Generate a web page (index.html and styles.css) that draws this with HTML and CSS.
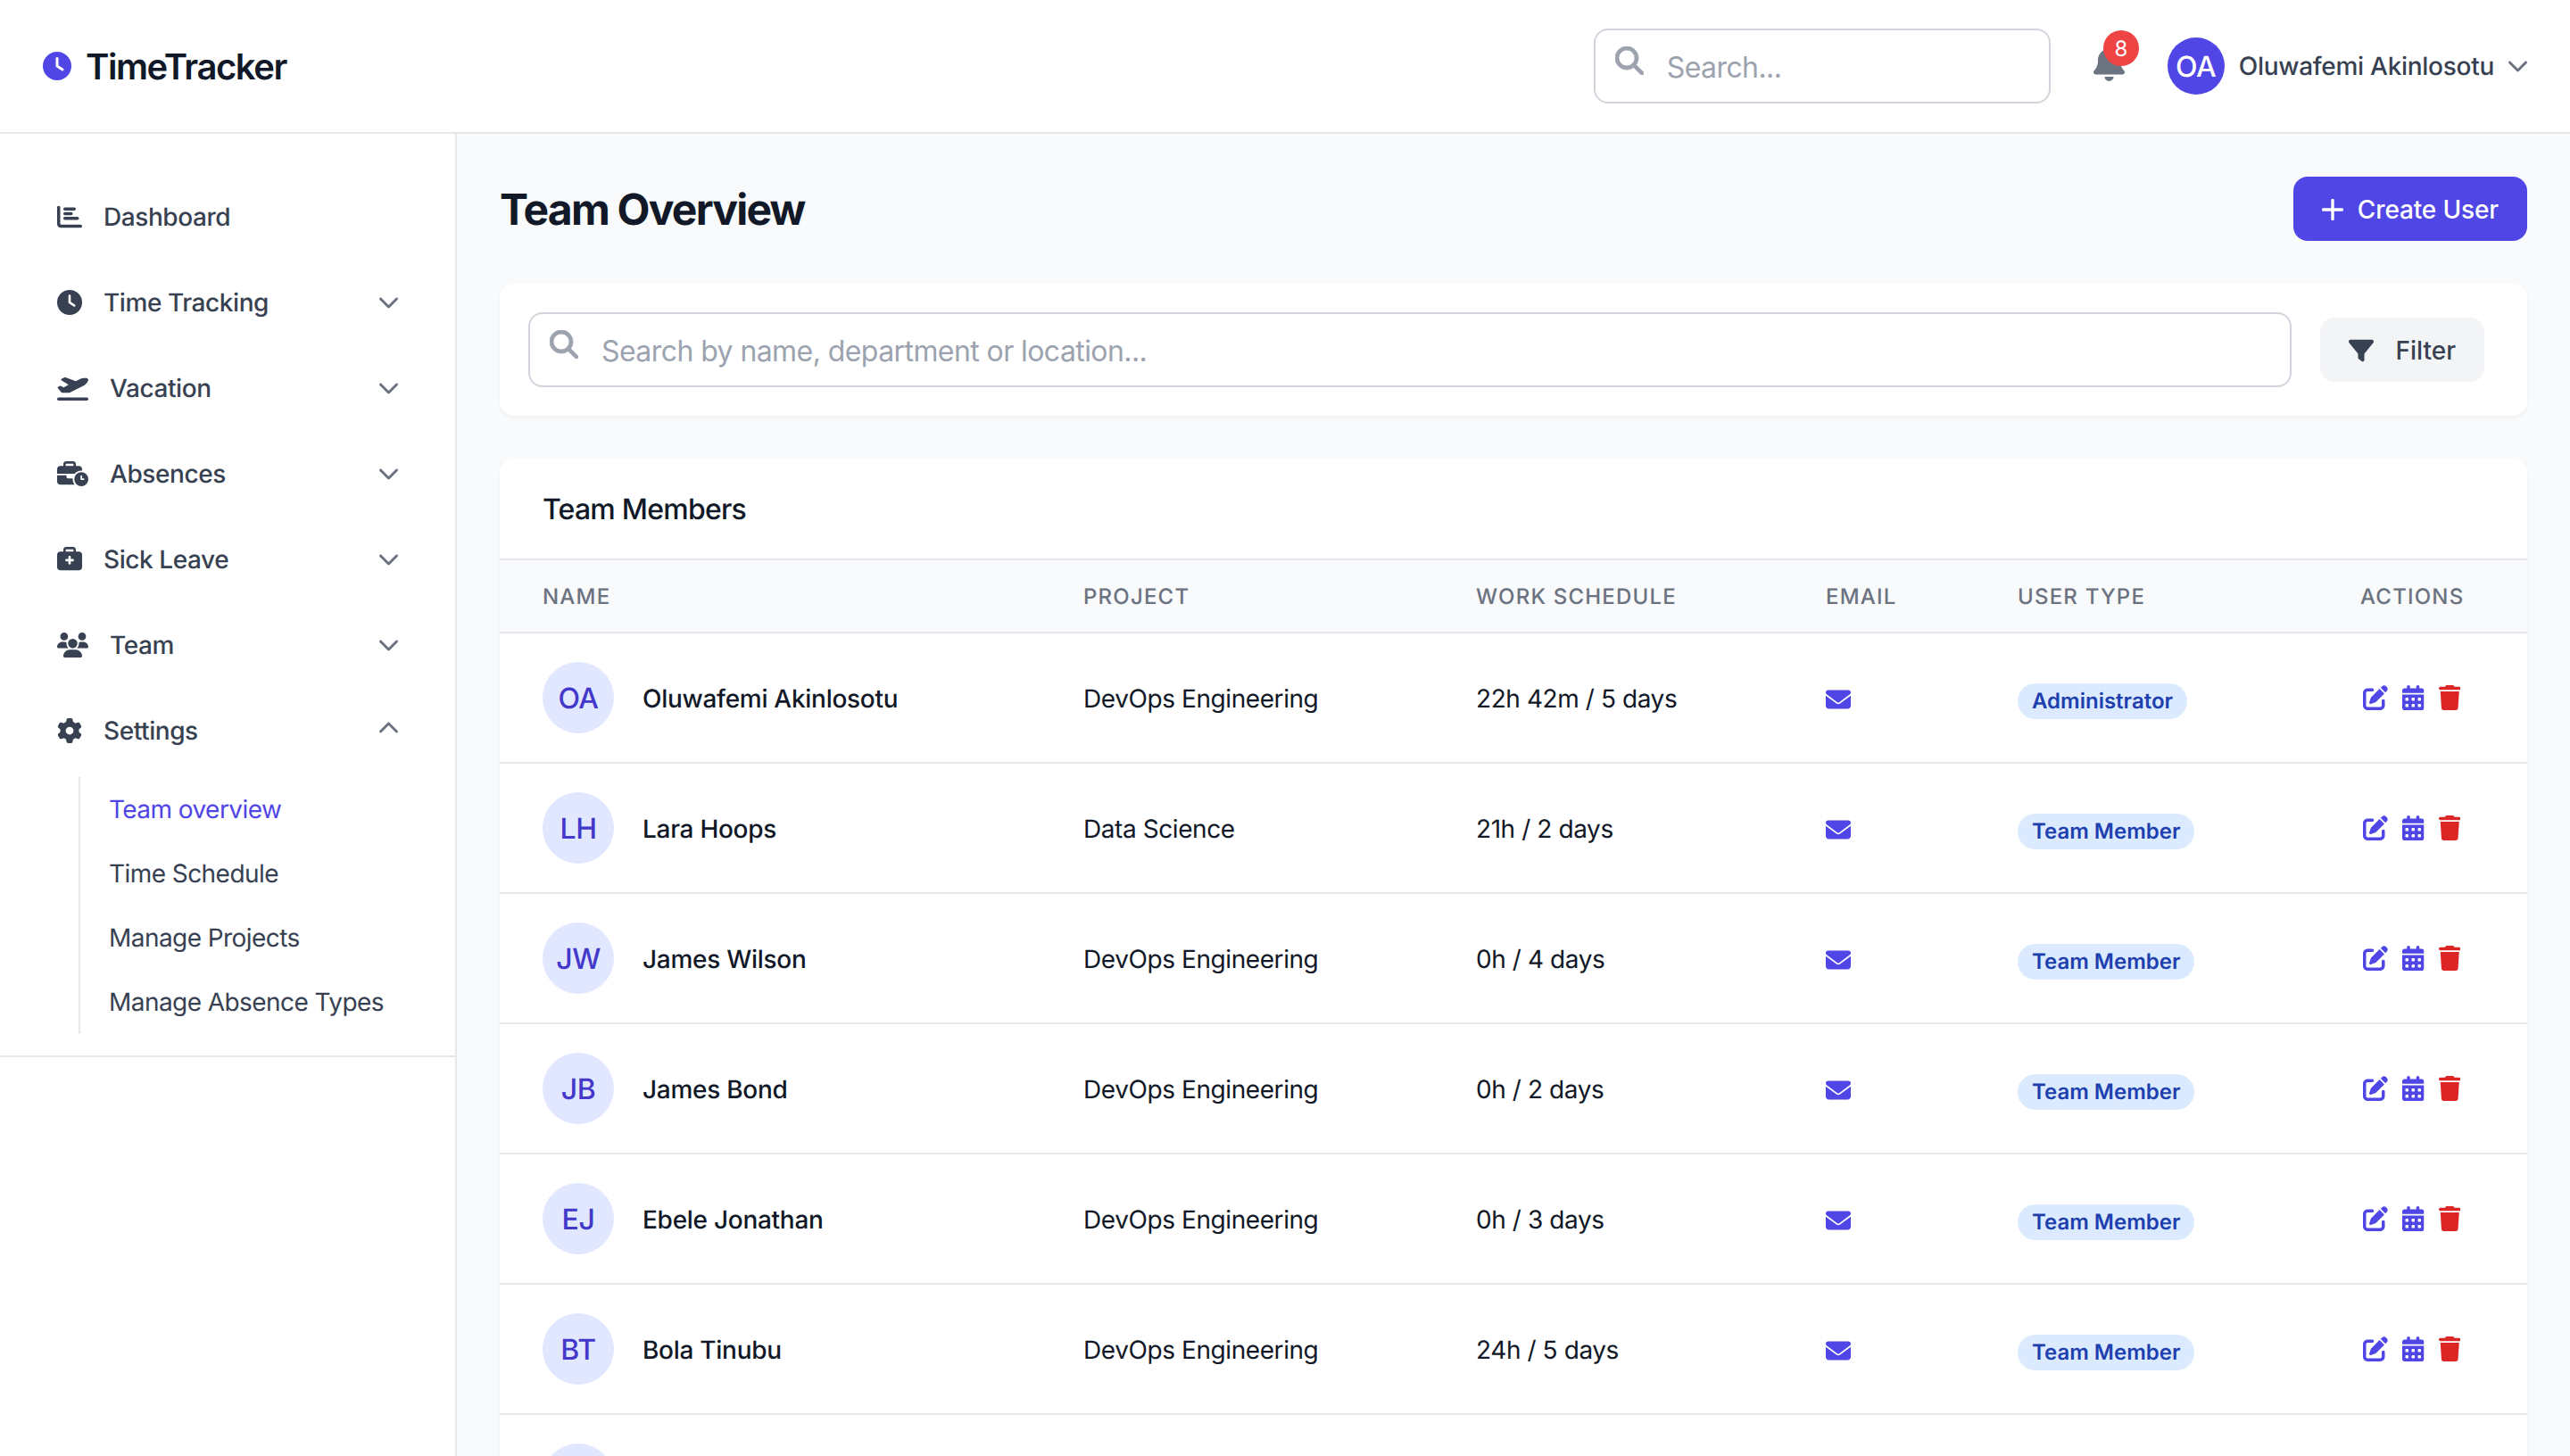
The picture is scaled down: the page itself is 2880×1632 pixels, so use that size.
FILE: index.html
```html
<!DOCTYPE html>
<html lang="en">
<head>
<meta charset="utf-8">
<title>TimeTracker</title>
<link rel="stylesheet" href="styles.css">
</head>
<body>
<svg class="defs" aria-hidden="true">
  <symbol id="i-clock" viewBox="0 0 512 512"><path d="M256 0a256 256 0 1 1 0 512A256 256 0 1 1 256 0zM232 120V256c0 8 4 15.5 10.7 20l96 64c11 7.4 25.9 4.4 33.3-6.7s4.4-25.9-6.7-33.3L280 243.2V120c0-13.3-10.7-24-24-24s-24 10.7-24 24z"/></symbol>
  <symbol id="i-chart" viewBox="0 0 512 512"><path d="M32 32c17.7 0 32 14.3 32 32V400c0 8.8 7.2 16 16 16H480c17.7 0 32 14.3 32 32s-14.3 32-32 32H80c-44.2 0-80-35.8-80-80V64C0 46.3 14.3 32 32 32zm96 64c0-17.7 14.3-32 32-32l192 0c17.7 0 32 14.3 32 32s-14.3 32-32 32l-192 0c-17.7 0-32-14.3-32-32zm32 64l128 0c17.7 0 32 14.3 32 32s-14.3 32-32 32l-128 0c-17.7 0-32-14.3-32-32s14.3-32 32-32zm0 96H416c17.7 0 32 14.3 32 32s-14.3 32-32 32H160c-17.7 0-32-14.3-32-32s14.3-32 32-32z"/></symbol>
  <symbol id="i-plane" viewBox="0 0 640 512"><path d="M381 114.9L186.1 41.8c-16.7-6.2-35.2-5.3-51.1 2.7L89.1 67.4C78 73 77.2 88.5 87.6 95.2l146.9 94.5L136 240 77.8 214.1c-8.7-3.9-18-3.7-26.5 .7L18.8 231c-9.3 4.7-11.8 16.8-5 24.7l73.1 85.3c6.1 7.1 15 11.2 24.3 11.2H248.4c5 0 9.9-1.2 14.3-3.4L535.6 212.2c46.5-23.3 82.5-63.3 100.8-112C645.9 75 627.2 48 600.2 48H542.8c-20.2 0-40.2 4.8-58.2 14L381 114.9zM0 480c0 17.7 14.3 32 32 32H608c17.7 0 32-14.3 32-32s-14.3-32-32-32H32c-17.7 0-32 14.3-32 32z"/></symbol>
  <symbol id="i-business" viewBox="0 0 640 512"><path d="M184 48H328c4.4 0 8 3.6 8 8V96H176V56c0-4.4 3.6-8 8-8zm-56 8V96H64C28.7 96 0 124.7 0 160v96H192 352h8.2c32.3-39.1 81.1-64 135.8-64c5.4 0 10.7 .2 16 .7V160c0-35.3-28.7-64-64-64H384V56c0-30.9-25.1-56-56-56H184c-30.9 0-56 25.1-56 56zM320 352H224c-17.7 0-32-14.3-32-32V288H0V416c0 35.3 28.7 64 64 64H360.2C335.1 449.6 320 410.5 320 368c0-5.4 .2-10.7 .7-16l-.7 0zm320 16a144 144 0 1 0 -288 0 144 144 0 1 0 288 0zM496 288c8.8 0 16 7.2 16 16v48h32c8.8 0 16 7.2 16 16s-7.2 16-16 16H496c-8.8 0-16-7.2-16-16V304c0-8.8 7.2-16 16-16z"/></symbol>
  <symbol id="i-medical" viewBox="0 0 512 512"><path d="M184 48H328c4.4 0 8 3.6 8 8V96H176V56c0-4.4 3.6-8 8-8zm-56 8V96H64C28.7 96 0 124.7 0 160V416c0 35.3 28.7 64 64 64H448c35.3 0 64-28.7 64-64V160c0-35.3-28.7-64-64-64H384V56c0-30.9-25.1-56-56-56H184c-30.9 0-56 25.1-56 56zM232 200c0-8.8 7.2-16 16-16h16c8.8 0 16 7.2 16 16v48h48c8.8 0 16 7.2 16 16v16c0 8.8-7.2 16-16 16H280v48c0 8.8-7.2 16-16 16H248c-8.8 0-16-7.2-16-16V296H184c-8.8 0-16-7.2-16-16V264c0-8.8 7.2-16 16-16h48V200z"/></symbol>
  <symbol id="i-users" viewBox="0 0 640 512"><path d="M144 0a80 80 0 1 1 0 160A80 80 0 1 1 144 0zM512 0a80 80 0 1 1 0 160A80 80 0 1 1 512 0zM0 298.7C0 239.8 47.8 192 106.7 192h42.7c15.9 0 31 3.5 44.6 9.7c-1.3 7.2-1.9 14.7-1.9 22.3c0 38.2 16.8 72.5 43.3 96c-.2 0-.4 0-.7 0H21.3C9.6 320 0 310.4 0 298.7zM405.3 320c-.2 0-.4 0-.7 0c26.6-23.5 43.3-57.8 43.3-96c0-7.6-.7-15-1.9-22.3c13.6-6.3 28.7-9.7 44.6-9.7h42.7C592.2 192 640 239.8 640 298.7c0 11.8-9.6 21.3-21.3 21.3H405.3zM224 224a96 96 0 1 1 192 0 96 96 0 1 1 -192 0zM128 485.3C128 411.7 187.7 352 261.3 352H378.7C452.3 352 512 411.7 512 485.3c0 14.7-11.9 26.7-26.7 26.7H154.7c-14.7 0-26.7-11.9-26.7-26.7z"/></symbol>
  <symbol id="i-gear" viewBox="0 0 512 512"><path d="M495.9 166.6c3.2 8.7 .5 18.4-6.4 24.6l-43.3 39.4c1.1 8.3 1.7 16.8 1.7 25.4s-.6 17.1-1.7 25.4l43.3 39.4c6.9 6.2 9.6 15.9 6.4 24.6c-4.4 11.9-9.7 23.3-15.8 34.3l-4.7 8.1c-6.6 11-14 21.4-22.1 31.2c-5.9 7.2-15.7 9.6-24.5 6.8l-55.7-17.7c-13.4 10.3-28.2 18.9-44 25.4l-12.5 57.1c-2 9.1-9 16.3-18.2 17.8c-13.8 2.3-28 3.5-42.5 3.5s-28.7-1.2-42.5-3.5c-9.2-1.5-16.2-8.7-18.2-17.8l-12.5-57.1c-15.8-6.5-30.6-15.1-44-25.4L83.1 425.9c-8.8 2.8-18.6 .3-24.5-6.8c-8.1-9.8-15.5-20.2-22.1-31.2l-4.7-8.1c-6.1-11-11.4-22.4-15.8-34.3c-3.2-8.7-.5-18.4 6.4-24.6l43.3-39.4C64.6 273.1 64 264.6 64 256s.6-17.1 1.7-25.4L22.4 191.2c-6.9-6.2-9.6-15.9-6.4-24.6c4.4-11.9 9.7-23.3 15.8-34.3l4.7-8.1c6.6-11 14-21.4 22.1-31.2c5.9-7.2 15.7-9.6 24.5-6.8l55.7 17.7c13.4-10.3 28.2-18.9 44-25.4l12.5-57.1c2-9.1 9-16.3 18.2-17.8C227.3 1.2 241.5 0 256 0s28.7 1.2 42.5 3.5c9.2 1.5 16.2 8.7 18.2 17.8l12.5 57.1c15.8 6.5 30.6 15.1 44 25.4l55.7-17.7c8.8-2.8 18.6-.3 24.5 6.8c8.1 9.8 15.5 20.2 22.1 31.2l4.7 8.1c6.1 11 11.4 22.4 15.8 34.3zM256 336a80 80 0 1 0 0-160 80 80 0 1 0 0 160z"/></symbol>
  <symbol id="i-chev" viewBox="32 128 448 320"><path d="M233.4 406.6c12.5 12.5 32.8 12.5 45.3 0l192-192c12.5-12.5 12.5-32.8 0-45.3s-32.8-12.5-45.3 0L256 338.7 86.6 169.4c-12.5-12.5-32.8-12.5-45.3 0s-12.5 32.8 0 45.3l192 192z"/></symbol>
  <symbol id="i-bell" viewBox="0 0 448 512"><path d="M224 0c-17.7 0-32 14.3-32 32V51.2C119 66 64 130.6 64 208v18.8c0 47-17.3 92.4-48.5 127.6l-7.4 8.3c-8.4 9.4-10.4 22.9-5.3 34.4S19.4 416 32 416H416c12.6 0 24-7.4 29.2-18.9s3.1-25-5.3-34.4l-7.4-8.3C401.3 319.2 384 273.9 384 226.8V208c0-77.4-55-142-128-156.8V32c0-17.7-14.3-32-32-32zm45.3 493.3c12-12 18.7-28.3 18.7-45.3H224 160c0 17 6.7 33.3 18.7 45.3s28.3 18.7 45.3 18.7s33.3-6.7 45.3-18.7z"/></symbol>
  <symbol id="i-search" viewBox="0 0 512 512"><path d="M416 208c0 45.9-14.9 88.3-40 122.7L502.6 457.4c12.5 12.5 12.5 32.8 0 45.3s-32.8 12.5-45.3 0L330.7 376c-34.4 25.2-76.8 40-122.7 40C93.1 416 0 322.9 0 208S93.1 0 208 0S416 93.1 416 208zM208 352a144 144 0 1 0 0-288 144 144 0 1 0 0 288z" stroke="currentColor" stroke-width="12"/></symbol>
  <symbol id="i-filter" viewBox="0 0 512 512"><path d="M3.9 54.9C10.5 40.9 24.5 32 40 32H472c15.5 0 29.5 8.9 36.1 22.9s4.6 30.5-5.2 42.5L320 320.9V448c0 12.1-6.8 23.2-17.7 28.6s-23.8 4.3-33.5-3l-64-48c-8.1-6-12.8-15.5-12.8-25.6V320.9L9 97.3C-.7 85.4-2.8 68.8 3.9 54.9z"/></symbol>
  <symbol id="i-plus" viewBox="0 0 24 24"><path d="M12 1.5v21M1.5 12h21" fill="none" stroke="currentColor" stroke-width="3.4" stroke-linecap="round"/></symbol>
  <symbol id="i-mail" viewBox="0 0 512 512"><path d="M48 64C21.5 64 0 85.5 0 112c0 15.1 7.1 29.3 19.2 38.4L236.8 313.6c11.4 8.5 27 8.5 38.4 0L492.8 150.4c12.1-9.1 19.2-23.3 19.2-38.4c0-26.5-21.5-48-48-48H48zM0 176V384c0 35.3 28.7 64 64 64H448c35.3 0 64-28.7 64-64V176L294.4 339.2c-22.8 17.1-54 17.1-76.8 0L0 176z"/></symbol>
  <symbol id="i-edit" viewBox="0 0 512 512"><path d="M471.6 21.7c-21.9-21.9-57.3-21.9-79.2 0L362.3 51.7l97.9 97.9 30.1-30.1c21.9-21.9 21.9-57.3 0-79.2L471.6 21.7zm-299.2 220c-6.1 6.1-10.8 13.6-13.5 21.9l-29.6 88.8c-2.9 8.6-.6 18.1 5.8 24.6s15.9 8.7 24.6 5.8l88.8-29.6c8.2-2.7 15.7-7.4 21.9-13.5L437.7 172.3 339.7 74.3 172.4 241.7zM96 64C43 64 0 107 0 160V416c0 53 43 96 96 96H352c53 0 96-43 96-96V320c0-17.7-14.3-32-32-32s-32 14.3-32 32v96c0 17.7-14.3 32-32 32H96c-17.7 0-32-14.3-32-32V160c0-17.7 14.3-32 32-32h96c17.7 0 32-14.3 32-32s-14.3-32-32-32H96z"/></symbol>
  <symbol id="i-cal" viewBox="0 0 448 512"><path d="M128 0c17.7 0 32 14.3 32 32V64H288V32c0-17.7 14.3-32 32-32s32 14.3 32 32V64h48c26.5 0 48 21.5 48 48v48H0V112C0 85.5 21.5 64 48 64H96V32c0-17.7 14.3-32 32-32zM0 192H448V464c0 26.5-21.5 48-48 48H48c-26.5 0-48-21.5-48-48V192zm64 80v32c0 8.8 7.2 16 16 16h32c8.8 0 16-7.2 16-16V272c0-8.8-7.2-16-16-16H80c-8.8 0-16 7.2-16 16zm128 0v32c0 8.8 7.2 16 16 16h32c8.8 0 16-7.2 16-16V272c0-8.8-7.2-16-16-16H208c-8.8 0-16 7.2-16 16zm144-16c-8.8 0-16 7.2-16 16v32c0 8.8 7.2 16 16 16h32c8.8 0 16-7.2 16-16V272c0-8.8-7.2-16-16-16H336zM64 400v32c0 8.8 7.2 16 16 16h32c8.8 0 16-7.2 16-16V400c0-8.8-7.2-16-16-16H80c-8.8 0-16 7.2-16 16zm144-16c-8.8 0-16 7.2-16 16v32c0 8.8 7.2 16 16 16h32c8.8 0 16-7.2 16-16V400c0-8.8-7.2-16-16-16H208c-8.8 0-16 7.2-16 16zm112 16v32c0 8.8 7.2 16 16 16h32c8.8 0 16-7.2 16-16V400c0-8.8-7.2-16-16-16H336c-8.8 0-16 7.2-16 16z"/></symbol>
  <symbol id="i-trash" viewBox="0 0 448 512"><path d="M135.2 17.7L128 32H32C14.3 32 0 46.3 0 64S14.3 96 32 96H416c17.7 0 32-14.3 32-32s-14.3-32-32-32H320l-7.2-14.3C307.4 6.8 296.3 0 284.2 0H163.8c-12.1 0-23.2 6.8-28.6 17.7zM416 128H32L53.2 467c1.6 25.3 22.6 45 47.9 45H346.9c25.3 0 46.3-19.7 47.9-45L416 128z"/></symbol>
</svg>

<header class="topbar">
  <div class="brand">
    <svg class="brand-icon"><use href="#i-clock"/></svg>
    <span class="brand-name">TimeTracker</span>
  </div>
  <div class="top-right">
    <div class="search search-top">
      <svg class="search-icon"><use href="#i-search"/></svg>
      <input class="search-input" type="text" placeholder="Search...">
    </div>
    <div class="bell">
      <svg class="bell-icon"><use href="#i-bell"/></svg>
      <span class="bell-badge">8</span>
    </div>
    <div class="user">
      <span class="user-avatar">OA</span>
      <span class="user-name">Oluwafemi Akinlosotu</span>
      <svg class="chev"><use href="#i-chev"/></svg>
    </div>
  </div>
</header>

<div class="shell">
  <aside class="sidebar">
    <nav class="nav">
      <a class="nav-item"><svg class="nav-icon"><use href="#i-chart"/></svg><span class="nav-label">Dashboard</span></a>
      <a class="nav-item"><svg class="nav-icon"><use href="#i-clock"/></svg><span class="nav-label">Time Tracking</span><svg class="chev"><use href="#i-chev"/></svg></a>
      <a class="nav-item"><svg class="nav-icon wide"><use href="#i-plane"/></svg><span class="nav-label">Vacation</span><svg class="chev"><use href="#i-chev"/></svg></a>
      <a class="nav-item"><svg class="nav-icon wide"><use href="#i-business"/></svg><span class="nav-label">Absences</span><svg class="chev"><use href="#i-chev"/></svg></a>
      <a class="nav-item"><svg class="nav-icon"><use href="#i-medical"/></svg><span class="nav-label">Sick Leave</span><svg class="chev"><use href="#i-chev"/></svg></a>
      <a class="nav-item"><svg class="nav-icon wide"><use href="#i-users"/></svg><span class="nav-label">Team</span><svg class="chev"><use href="#i-chev"/></svg></a>
      <a class="nav-item nav-open"><svg class="nav-icon"><use href="#i-gear"/></svg><span class="nav-label">Settings</span><svg class="chev up"><use href="#i-chev"/></svg></a>
      <div class="subnav">
        <a class="sub-item active">Team overview</a>
        <a class="sub-item">Time Schedule</a>
        <a class="sub-item">Manage Projects</a>
        <a class="sub-item">Manage Absence Types</a>
      </div>
    </nav>
  </aside>

  <main class="main">
    <div class="page-head">
      <h1 class="page-title">Team Overview</h1>
      <button class="btn-create"><svg class="plus-icon"><use href="#i-plus"/></svg>Create User</button>
    </div>

    <section class="card filter-card">
      <div class="search search-main">
        <svg class="search-icon"><use href="#i-search"/></svg>
        <input class="search-input" type="text" placeholder="Search by name, department or location...">
      </div>
      <button class="btn-filter"><svg class="filter-icon"><use href="#i-filter"/></svg>Filter</button>
    </section>

    <section class="card table-card">
      <h2 class="table-title">Team Members</h2>
      <table class="team">
        <colgroup>
          <col class="c-name"><col class="c-project"><col class="c-schedule"><col class="c-email"><col class="c-type"><col class="c-actions">
        </colgroup>
        <thead>
          <tr><th>Name</th><th>Project</th><th>Work Schedule</th><th>Email</th><th>User Type</th><th>Actions</th></tr>
        </thead>
        <tbody>
          <tr>
            <td><div class="person"><span class="avatar">OA</span><span class="person-name">Oluwafemi Akinlosotu</span></div></td>
            <td>DevOps Engineering</td><td>22h 42m / 5 days</td>
            <td><svg class="mail"><use href="#i-mail"/></svg></td>
            <td><span class="badge">Administrator</span></td>
            <td><div class="actions"><svg class="act edit"><use href="#i-edit"/></svg><svg class="act cal"><use href="#i-cal"/></svg><svg class="act trash"><use href="#i-trash"/></svg></div></td>
          </tr>
          <tr>
            <td><div class="person"><span class="avatar">LH</span><span class="person-name">Lara Hoops</span></div></td>
            <td>Data Science</td><td>21h / 2 days</td>
            <td><svg class="mail"><use href="#i-mail"/></svg></td>
            <td><span class="badge">Team Member</span></td>
            <td><div class="actions"><svg class="act edit"><use href="#i-edit"/></svg><svg class="act cal"><use href="#i-cal"/></svg><svg class="act trash"><use href="#i-trash"/></svg></div></td>
          </tr>
          <tr>
            <td><div class="person"><span class="avatar">JW</span><span class="person-name">James Wilson</span></div></td>
            <td>DevOps Engineering</td><td>0h / 4 days</td>
            <td><svg class="mail"><use href="#i-mail"/></svg></td>
            <td><span class="badge">Team Member</span></td>
            <td><div class="actions"><svg class="act edit"><use href="#i-edit"/></svg><svg class="act cal"><use href="#i-cal"/></svg><svg class="act trash"><use href="#i-trash"/></svg></div></td>
          </tr>
          <tr>
            <td><div class="person"><span class="avatar">JB</span><span class="person-name">James Bond</span></div></td>
            <td>DevOps Engineering</td><td>0h / 2 days</td>
            <td><svg class="mail"><use href="#i-mail"/></svg></td>
            <td><span class="badge">Team Member</span></td>
            <td><div class="actions"><svg class="act edit"><use href="#i-edit"/></svg><svg class="act cal"><use href="#i-cal"/></svg><svg class="act trash"><use href="#i-trash"/></svg></div></td>
          </tr>
          <tr>
            <td><div class="person"><span class="avatar">EJ</span><span class="person-name">Ebele Jonathan</span></div></td>
            <td>DevOps Engineering</td><td>0h / 3 days</td>
            <td><svg class="mail"><use href="#i-mail"/></svg></td>
            <td><span class="badge">Team Member</span></td>
            <td><div class="actions"><svg class="act edit"><use href="#i-edit"/></svg><svg class="act cal"><use href="#i-cal"/></svg><svg class="act trash"><use href="#i-trash"/></svg></div></td>
          </tr>
          <tr>
            <td><div class="person"><span class="avatar">BT</span><span class="person-name">Bola Tinubu</span></div></td>
            <td>DevOps Engineering</td><td>24h / 5 days</td>
            <td><svg class="mail"><use href="#i-mail"/></svg></td>
            <td><span class="badge">Team Member</span></td>
            <td><div class="actions"><svg class="act edit"><use href="#i-edit"/></svg><svg class="act cal"><use href="#i-cal"/></svg><svg class="act trash"><use href="#i-trash"/></svg></div></td>
          </tr>
          <tr>
            <td><div class="person"><span class="avatar"></span></div></td>
            <td></td><td></td><td></td><td></td><td></td>
          </tr>
        </tbody>
      </table>
    </section>
  </main>
</div>
</body>
</html>
```

FILE: styles.css
```css
* { box-sizing: border-box; }
html, body { margin: 0; height: 100%; overflow: hidden; }
body {
  font-family: Inter, "Noto Sans", "Liberation Sans", sans-serif;
  font-size: 28px;
  letter-spacing: -.015em;
  color: #111827;
  background: #f9fafb;
  text-rendering: geometricPrecision;
  display: flex;
  flex-direction: column;
}
.defs { position: absolute; width: 0; height: 0; }
svg { display: block; fill: currentColor; flex: none; }

/* top bar */
.topbar {
  height: 150px;
  flex: none;
  display: flex;
  align-items: center;
  justify-content: space-between;
  padding: 0 48px;
  background: #fff;
  border-bottom: 2px solid #e5e7eb;
}
.brand { display: flex; align-items: center; gap: 16px; }
.brand-icon { width: 32px; height: 32px; color: #4f46e5; }
.brand-name { font-size: 40px; font-weight: 600; letter-spacing: -.036em; color: #111827; }
.top-right { display: flex; align-items: center; gap: 48px; }

.search { position: relative; }
.search-top { width: 512px; }
.search-main { flex: 1; }
.search-icon { position: absolute; left: 24px; top: 20px; width: 32px; height: 32px; color: #9ca3af; }
.search-input {
  display: block;
  width: 100%;
  height: 84px;
  padding: 2px 24px 0 80px;
  font: inherit;
  font-size: 32px;
  letter-spacing: -.018em;
  color: #111827;
  background: #fff;
  border: 2px solid #d1d5db;
  border-radius: 16px;
  outline: none;
}
.search-input::placeholder { color: #9ca3af; opacity: 1; }

.bell { position: relative; color: #6b7280; margin-bottom: 6px; }
.bell-icon { width: 35px; height: 40px; }
.bell-badge {
  position: absolute;
  left: 11px;
  top: -17px;
  width: 40px;
  height: 40px;
  border-radius: 50%;
  background: #ef4444;
  color: #fff;
  font-size: 24px;
  display: flex;
  align-items: center;
  justify-content: center;
}
.user { display: flex; align-items: center; }
.user-avatar {
  width: 64px;
  height: 64px;
  border-radius: 50%;
  background: #4f46e5;
  color: #fff;
  font-size: 32px;
  font-weight: 500;
  display: flex;
  align-items: center;
  justify-content: center;
  margin-right: 16px;
}
.user-name { font-size: 28px; font-weight: 500; letter-spacing: -.01em; color: #374151; margin-right: 16px; }
.chev { width: 21px; height: 15px; color: #6b7280; }
.chev.up { transform: rotate(180deg) translateY(4px); }

/* shell */
.shell { flex: 1; min-height: 0; display: flex; }
.sidebar { width: 512px; flex: none; background: #fff; border-right: 2px solid #e5e7eb; }
.nav { padding: 57px 64px 24px; border-bottom: 2px solid #e5e7eb; }
.nav-item {
  height: 72px;
  margin-bottom: 24px;
  display: flex;
  align-items: center;
  gap: 24px;
  color: #374151;
}
.nav-item.nav-open { margin-bottom: 16px; }
.nav-icon { width: 28px; height: 28px; }
.nav-icon.wide { width: 35px; }
.nav-label { flex: 1; font-size: 28px; font-weight: 500; }
.subnav { margin-left: 24px; padding-left: 32px; border-left: 2px solid #e5e7eb; }
.sub-item { height: 72px; display: flex; align-items: center; font-size: 28px; letter-spacing: -.02em; color: #374151; white-space: nowrap; }
.sub-item.active { color: #4f46e5; }

/* main */
.main { flex: 1; min-width: 0; padding: 48px; overflow: hidden; }
.page-head { height: 72px; display: flex; align-items: center; justify-content: space-between; margin-bottom: 48px; }
.page-title { margin: 0; font-size: 48px; font-weight: 700; letter-spacing: -.037em; color: #111827; }
.btn-create {
  height: 72px;
  padding: 2px 32px 0;
  display: flex;
  align-items: center;
  gap: 16px;
  font: inherit;
  font-weight: 500;
  font-size: 28px;
  letter-spacing: -.005em;
  color: #fff;
  background: #4f46e5;
  border: 0;
  border-radius: 16px;
}
.plus-icon { width: 24px; height: 24px; }

.card { background: #fff; border-radius: 16px; box-shadow: 0 2px 4px rgba(0,0,0,.05); }
.filter-card { display: flex; align-items: center; gap: 32px; padding: 32px 48px 32px 32px; margin-bottom: 48px; }
.btn-filter {
  height: 72px;
  padding: 2px 32px 0;
  display: flex;
  align-items: center;
  gap: 24px;
  font: inherit;
  font-weight: 500;
  font-size: 28px;
  letter-spacing: 0;
  color: #374151;
  background: #f3f4f6;
  border: 0;
  border-radius: 16px;
}
.filter-icon { width: 28px; height: 28px; }

/* table */
.table-card { overflow: hidden; }
.table-title { margin: 0; height: 114px; padding: 33px 48px 31px; border-bottom: 2px solid #e5e7eb; font-size: 32px; line-height: 48px; font-weight: 500; letter-spacing: -.024em; color: #111827; }
.team { width: 100%; table-layout: fixed; border-collapse: separate; border-spacing: 0; }
.c-name { width: 606px; }
.c-project { width: 440px; }
.c-schedule { width: 392px; }
.c-email { width: 215px; }
.c-type { width: 384px; }
.c-actions { width: 235px; }
.team th {
  height: 82px;
  padding: 0 0 0 48px;
  text-align: left;
  font-size: 24px;
  font-weight: 500;
  letter-spacing: .05em;
  text-transform: uppercase;
  color: #6b7280;
  background: #f9fafb;
  border-bottom: 2px solid #e5e7eb;
}
.team td { height: 146px; padding: 2px 0 0 48px; border-bottom: 2px solid #e5e7eb; color: #111827; }
.person { display: flex; align-items: center; gap: 32px; margin-top: -2px; }
.avatar {
  width: 80px;
  height: 80px;
  flex: none;
  border-radius: 50%;
  background: #e0e7ff;
  color: #4338ca;
  font-size: 32px;
  font-weight: 500;
  display: flex;
  align-items: center;
  justify-content: center;
}
.person-name { font-weight: 500; letter-spacing: -.01em; padding-top: 2px; }
.mail { width: 28px; height: 28px; margin-top: 1px; color: #4f46e5; }
.badge {
  display: inline-block;
  height: 40px;
  line-height: 40px;
  margin-top: 6px;
  padding: 0 16px;
  border-radius: 20px;
  font-size: 24px;
  font-weight: 600;
  letter-spacing: 0;
  color: #1e40af;
  background: #dbeafe;
}
.actions { display: flex; align-items: center; gap: 16px; padding-left: 3px; margin-top: -2px; }
.act { height: 28px; }
.act.edit { width: 28px; color: #4f46e5; }
.act.cal { width: 24.5px; color: #4f46e5; }
.act.trash { width: 24.5px; color: #dc2626; }
```
